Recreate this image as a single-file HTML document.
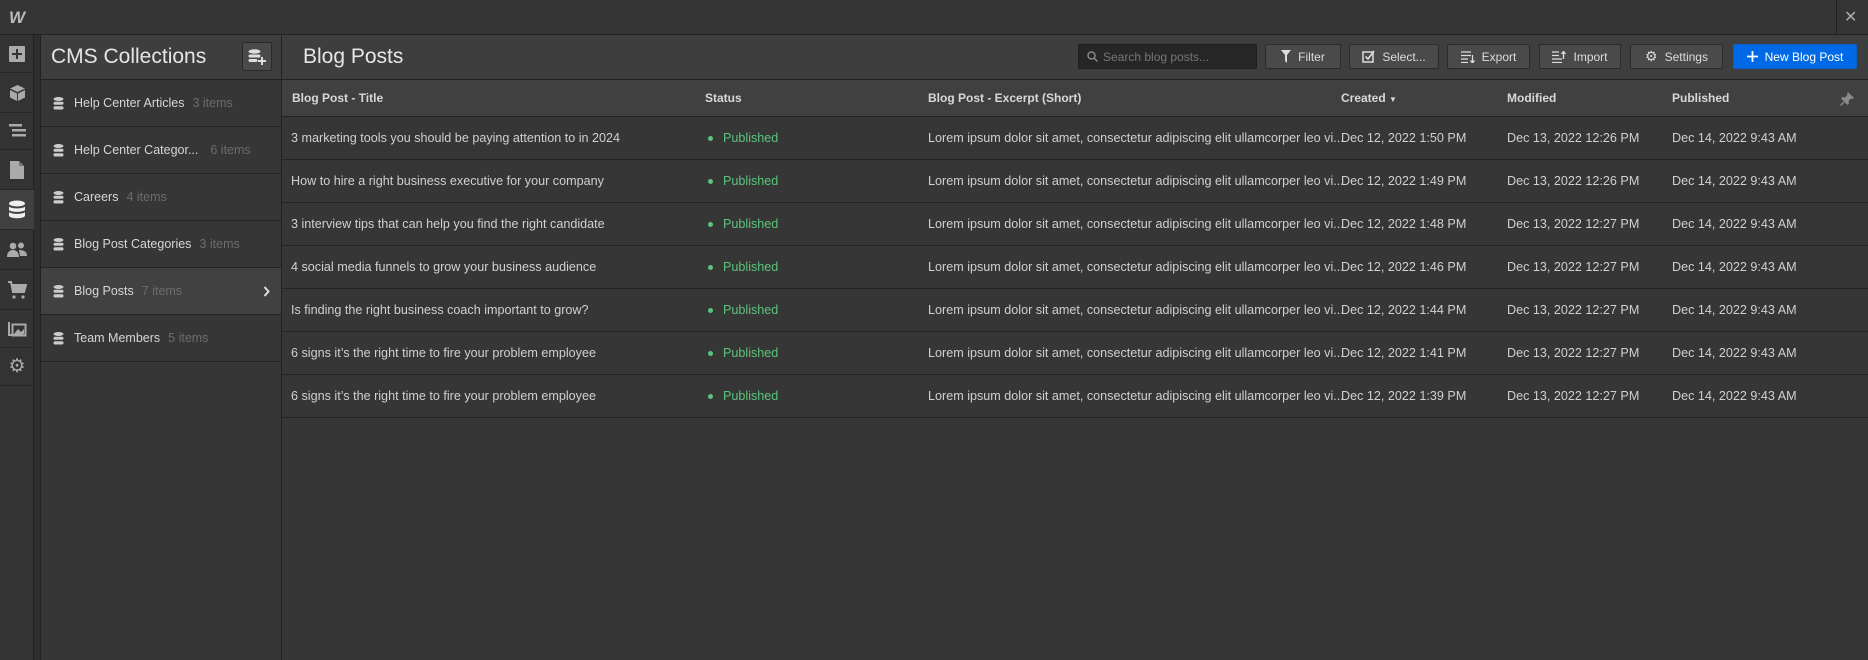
<!DOCTYPE html>
<html><head><meta charset="utf-8"><style>
*{box-sizing:border-box;margin:0;padding:0}
body{width:1868px;height:660px;background:#363636;font-family:"Liberation Sans",sans-serif;color:#d9d9d9;position:relative;overflow:hidden;font-size:12.5px}
.abs{position:absolute}
.top{left:0;top:0;width:1868px;height:35px;background:#353535;border-bottom:1px solid #222}
.iconbar{left:0;top:35px;width:34px;height:625px;background:#333;border-right:1px solid #222}
.ib{position:absolute;left:0;width:34px;border-bottom:1px solid #262626;display:flex;align-items:center;justify-content:center}
.stripe{left:34px;top:35px;width:7px;height:625px;background:#2e2e2e;border-right:1px solid #222}
.coll{left:41px;top:35px;width:241px;height:625px;background:#363636;border-right:1px solid #222}
.chead{position:absolute;left:0;top:0;width:240px;height:45px;background:#3e3e3e;border-bottom:1px solid #222}
.crow{position:absolute;left:0;width:240px;height:47px;border-bottom:1px solid #242424;display:flex;align-items:center;padding-left:12px;font-size:12.5px;color:#d6d6d6}
.crow .n{color:#6c6c6c;margin-left:8px}
.db{width:11px;height:13px;margin-right:10px}
.main{left:282px;top:35px;width:1586px;height:625px;background:#363636}
.mhead{position:absolute;left:0;top:0;width:1586px;height:45px;background:#3e3e3e;border-bottom:1px solid #222}
.btn{position:absolute;top:9px;height:25px;background:#4a4a4a;border:1px solid #2a2a2a;border-radius:2px;color:#ddd;font-size:12px;display:flex;align-items:center;justify-content:center;gap:7px}
.th{position:absolute;left:0;top:45px;width:1586px;height:37px;background:#404040;border-bottom:1px solid #222;font-weight:bold;font-size:12px;color:#d8d8d8}
.th span,.tr span{position:absolute;top:50%;transform:translateY(-50%);white-space:nowrap}
.tr{position:absolute;left:0;width:1586px;height:43px;border-bottom:1px solid #242424;font-size:12.6px;color:#d0d0d0}
.pub{color:#5ac47b}
.dot{position:absolute;width:5px;height:5px;border-radius:50%;background:#5ac47b;top:19px}
</style></head><body>
<div class="abs top">
 <div class="abs" style="left:0;top:0;width:34px;height:35px;display:flex;align-items:center;justify-content:center;font:italic bold 17px 'Liberation Sans',sans-serif;color:#bbb">W</div>
 <div class="abs" style="left:1836px;top:0;width:1px;height:35px;background:#222"></div>
 <div class="abs" style="left:1844px;top:7px;color:#aaa;font-size:16px">✕</div>
</div>
<div class="abs iconbar">
 <div class="ib" style="top:0;height:38px"><div style="width:16px;height:16px;background:#aaa;position:relative;border-radius:1px"><div style="position:absolute;left:7px;top:3px;width:2px;height:10px;background:#333"></div><div style="position:absolute;left:3px;top:7px;width:10px;height:2px;background:#333"></div></div></div>
 <div class="ib" style="top:38px;height:40px"><svg width="17" height="18" viewBox="0 0 17 18"><path d="M8.5 1L16 4.5 8.5 8 1 4.5Z M1 6L8 9.5V17L1 13.5Z M16 6L9 9.5V17L16 13.5Z" fill="#aaa"/></svg></div>
 <div class="ib" style="top:78px;height:37px"><svg width="17" height="14"><rect x="0" y="0" width="13" height="2.5" fill="#aaa"/><rect x="3" y="5" width="14" height="2.5" fill="#aaa"/><rect x="3" y="10" width="14" height="2.5" fill="#aaa"/></svg></div>
 <div class="ib" style="top:115px;height:40px"><svg width="14" height="18"><path d="M0 0H9L14 5V18H0Z" fill="#aaa"/><path d="M9 0V5H14" fill="#777"/></svg></div>
 <div class="ib" style="top:155px;height:40px;background:#404040;border-right:1px solid #404040"><svg width="18" height="20" viewBox="0 0 18 20"><ellipse cx="9" cy="3.5" rx="8" ry="3" fill="#eee"/><path d="M1 6.5c2 2.5 14 2.5 16 0v3.5c-2 2.5-14 2.5-16 0z M1 12c2 2.5 14 2.5 16 0v4c-2 3-14 3-16 0z" fill="#eee"/></svg></div>
 <div class="ib" style="top:195px;height:40px"><svg width="20" height="15"><circle cx="6" cy="4" r="3.3" fill="#aaa"/><circle cx="14" cy="3.5" r="3" fill="#aaa"/><path d="M0 15c0-5 3-7 6-7s6 2 6 7z M12 8c4 0 8 1 8 6h-7z" fill="#aaa"/></svg></div>
 <div class="ib" style="top:235px;height:40px"><svg width="19" height="18"><path d="M0 1H3L5 11H16L18 4H4" stroke="#aaa" stroke-width="2" fill="none"/><path d="M4 4H18L16 11H5Z" fill="#aaa"/><circle cx="6" cy="16" r="1.6" fill="#aaa"/><circle cx="15" cy="16" r="1.6" fill="#aaa"/></svg></div>
 <div class="ib" style="top:275px;height:38px"><svg width="19" height="17"><path d="M1 2V15H15" stroke="#aaa" stroke-width="2" fill="none"/><rect x="4.5" y="4.5" width="13" height="11" stroke="#aaa" stroke-width="2" fill="none"/><path d="M6 14L10 9L13 12L16 9V14Z" fill="#aaa"/></svg></div>
 <div class="ib" style="top:313px;height:38px;font-size:19px;color:#aaa">⚙</div>
</div>
<div class="abs stripe"></div>
<div class="abs coll">
 <div class="chead"><div class="abs" style="left:10px;top:10px;font-size:21px;color:#e6e6e6">CMS Collections</div>
  <div class="abs" style="left:201px;top:7px;width:30px;height:29px;background:#4a4a4a;border:1px solid #2a2a2a;border-radius:2px;display:flex;align-items:center;justify-content:center"><svg width="18" height="16"><ellipse cx="6.5" cy="2.5" rx="6" ry="2.2" fill="#ddd"/><rect x="0.5" y="5.5" width="12" height="3" rx="1.5" fill="#ddd"/><rect x="0.5" y="10" width="9" height="3" rx="1.5" fill="#ddd"/><path d="M14 8V16M10 12H18" stroke="#ddd" stroke-width="2"/></svg></div></div>
 <div class="crow" style="top:45px"><svg class="db" viewBox="0 0 11 13"><ellipse cx="5.5" cy="2" rx="5" ry="2" fill="#ccc"/><rect x="0.5" y="4.8" width="10" height="3" rx="1.5" fill="#ccc"/><rect x="0.5" y="9.3" width="10" height="3.2" rx="1.6" fill="#ccc"/></svg>Help Center Articles<span class="n">3 items</span></div>
 <div class="crow" style="top:92px"><svg class="db" viewBox="0 0 11 13"><ellipse cx="5.5" cy="2" rx="5" ry="2" fill="#ccc"/><rect x="0.5" y="4.8" width="10" height="3" rx="1.5" fill="#ccc"/><rect x="0.5" y="9.3" width="10" height="3.2" rx="1.6" fill="#ccc"/></svg>Help Center Categor...<span class="n" style="margin-left:12px">6 items</span></div>
 <div class="crow" style="top:139px"><svg class="db" viewBox="0 0 11 13"><ellipse cx="5.5" cy="2" rx="5" ry="2" fill="#ccc"/><rect x="0.5" y="4.8" width="10" height="3" rx="1.5" fill="#ccc"/><rect x="0.5" y="9.3" width="10" height="3.2" rx="1.6" fill="#ccc"/></svg>Careers<span class="n">4 items</span></div>
 <div class="crow" style="top:186px"><svg class="db" viewBox="0 0 11 13"><ellipse cx="5.5" cy="2" rx="5" ry="2" fill="#ccc"/><rect x="0.5" y="4.8" width="10" height="3" rx="1.5" fill="#ccc"/><rect x="0.5" y="9.3" width="10" height="3.2" rx="1.6" fill="#ccc"/></svg>Blog Post Categories<span class="n">3 items</span></div>
 <div class="crow" style="top:233px;background:#414141"><svg class="db" viewBox="0 0 11 13"><ellipse cx="5.5" cy="2" rx="5" ry="2" fill="#ccc"/><rect x="0.5" y="4.8" width="10" height="3" rx="1.5" fill="#ccc"/><rect x="0.5" y="9.3" width="10" height="3.2" rx="1.6" fill="#ccc"/></svg>Blog Posts<span class="n">7 items</span><svg class="abs" style="left:222px;top:18px" width="7" height="11"><path d="M1.5 1L5.5 5.5L1.5 10" stroke="#ddd" stroke-width="2" fill="none"/></svg></div>
 <div class="crow" style="top:280px"><svg class="db" viewBox="0 0 11 13"><ellipse cx="5.5" cy="2" rx="5" ry="2" fill="#ccc"/><rect x="0.5" y="4.8" width="10" height="3" rx="1.5" fill="#ccc"/><rect x="0.5" y="9.3" width="10" height="3.2" rx="1.6" fill="#ccc"/></svg>Team Members<span class="n">5 items</span></div>
</div>
<div class="abs main">
 <div class="mhead">
  <div class="abs" style="left:21px;top:10px;font-size:21px;color:#e6e6e6">Blog Posts</div>
  <div class="abs" style="left:796px;top:9px;width:179px;height:25px;background:#262626;border:1px solid #1e1e1e;border-radius:2px;color:#777;font-size:12px;display:flex;align-items:center;padding-left:8px;gap:5px"><svg width="11" height="11"><circle cx="4.5" cy="4.5" r="3.5" stroke="#888" stroke-width="1.5" fill="none"/><path d="M7 7L10.5 10.5" stroke="#888" stroke-width="1.5"/></svg>Search blog posts...</div>
  <div class="btn" style="left:983px;width:76px"><svg width="10" height="13"><path d="M0 0H10L6 5V13L4 11V5Z" fill="#ddd"/></svg>Filter</div>
  <div class="btn" style="left:1067px;width:90px"><svg width="13" height="13"><rect x="1" y="2" width="10" height="10" stroke="#ddd" stroke-width="1.5" fill="none"/><path d="M3.5 6.5L6 9L12 1" stroke="#ddd" stroke-width="1.6" fill="none"/></svg>Select...</div>
  <div class="btn" style="left:1165px;width:83px"><svg width="14" height="12"><path d="M0 1H10M0 4.5H10M0 8H7M0 11.5H7" stroke="#ddd" stroke-width="1.3"/><path d="M11.5 4V12M9.5 9.5L11.5 12L13.5 9.5" stroke="#ddd" stroke-width="1.3" fill="none"/></svg>Export</div>
  <div class="btn" style="left:1257px;width:82px"><svg width="14" height="12"><path d="M0 11.5H10M0 8H10M0 4.5H7M0 1H7" stroke="#ddd" stroke-width="1.3"/><path d="M11.5 8V0.5M9.5 3L11.5 0.5L13.5 3" stroke="#ddd" stroke-width="1.3" fill="none"/></svg>Import</div>
  <div class="btn" style="left:1348px;width:93px"><span style="font-size:14px">⚙</span>Settings</div>
  <div class="btn" style="left:1451px;width:124px;background:#006ae6;border-color:#0a5fc8;color:#fff"><svg width="11" height="11"><path d="M5.5 0V11M0 5.5H11" stroke="#fff" stroke-width="1.8"/></svg>New Blog Post</div>
 </div>
 <div class="th">
  <span style="left:10px">Blog Post - Title</span>
  <span style="left:423px">Status</span>
  <span style="left:646px">Blog Post - Excerpt (Short)</span>
  <span style="left:1059px">Created <span style="position:static;transform:none;font-size:8px">▼</span></span>
  <span style="left:1225px">Modified</span>
  <span style="left:1390px">Published</span>
  <svg class="abs" style="left:1558px;top:12px" width="14" height="14" viewBox="0 0 14 14"><path d="M8 0L14 6L12.5 7L11 6.5L8.5 9L9 11.5L7.5 13L1 6.5L2.5 5L5 5.5L7.5 3L7 1.5Z" fill="#8a8a8a"/><path d="M4 10L0.5 13.5" stroke="#8a8a8a" stroke-width="1.5"/></svg>
 </div>
 <div class="tr" style="top:82px"><span style="left:9px">3 marketing tools you should be paying attention to in 2024</span><i class="dot" style="left:426px"></i><span class="pub" style="left:441px">Published</span><span style="left:646px">Lorem ipsum dolor sit amet, consectetur adipiscing elit ullamcorper leo vi...</span><span style="left:1059px">Dec 12, 2022 1:50 PM</span><span style="left:1225px">Dec 13, 2022 12:26 PM</span><span style="left:1390px">Dec 14, 2022 9:43 AM</span></div>
 <div class="tr" style="top:125px"><span style="left:9px">How to hire a right business executive for your company</span><i class="dot" style="left:426px"></i><span class="pub" style="left:441px">Published</span><span style="left:646px">Lorem ipsum dolor sit amet, consectetur adipiscing elit ullamcorper leo vi...</span><span style="left:1059px">Dec 12, 2022 1:49 PM</span><span style="left:1225px">Dec 13, 2022 12:26 PM</span><span style="left:1390px">Dec 14, 2022 9:43 AM</span></div>
 <div class="tr" style="top:168px"><span style="left:9px">3 interview tips that can help you find the right candidate</span><i class="dot" style="left:426px"></i><span class="pub" style="left:441px">Published</span><span style="left:646px">Lorem ipsum dolor sit amet, consectetur adipiscing elit ullamcorper leo vi...</span><span style="left:1059px">Dec 12, 2022 1:48 PM</span><span style="left:1225px">Dec 13, 2022 12:27 PM</span><span style="left:1390px">Dec 14, 2022 9:43 AM</span></div>
 <div class="tr" style="top:211px"><span style="left:9px">4 social media funnels to grow your business audience</span><i class="dot" style="left:426px"></i><span class="pub" style="left:441px">Published</span><span style="left:646px">Lorem ipsum dolor sit amet, consectetur adipiscing elit ullamcorper leo vi...</span><span style="left:1059px">Dec 12, 2022 1:46 PM</span><span style="left:1225px">Dec 13, 2022 12:27 PM</span><span style="left:1390px">Dec 14, 2022 9:43 AM</span></div>
 <div class="tr" style="top:254px"><span style="left:9px">Is finding the right business coach important to grow?</span><i class="dot" style="left:426px"></i><span class="pub" style="left:441px">Published</span><span style="left:646px">Lorem ipsum dolor sit amet, consectetur adipiscing elit ullamcorper leo vi...</span><span style="left:1059px">Dec 12, 2022 1:44 PM</span><span style="left:1225px">Dec 13, 2022 12:27 PM</span><span style="left:1390px">Dec 14, 2022 9:43 AM</span></div>
 <div class="tr" style="top:297px"><span style="left:9px">6 signs it’s the right time to fire your problem employee</span><i class="dot" style="left:426px"></i><span class="pub" style="left:441px">Published</span><span style="left:646px">Lorem ipsum dolor sit amet, consectetur adipiscing elit ullamcorper leo vi...</span><span style="left:1059px">Dec 12, 2022 1:41 PM</span><span style="left:1225px">Dec 13, 2022 12:27 PM</span><span style="left:1390px">Dec 14, 2022 9:43 AM</span></div>
 <div class="tr" style="top:340px"><span style="left:9px">6 signs it’s the right time to fire your problem employee</span><i class="dot" style="left:426px"></i><span class="pub" style="left:441px">Published</span><span style="left:646px">Lorem ipsum dolor sit amet, consectetur adipiscing elit ullamcorper leo vi...</span><span style="left:1059px">Dec 12, 2022 1:39 PM</span><span style="left:1225px">Dec 13, 2022 12:27 PM</span><span style="left:1390px">Dec 14, 2022 9:43 AM</span></div>
</div>
</body></html>
